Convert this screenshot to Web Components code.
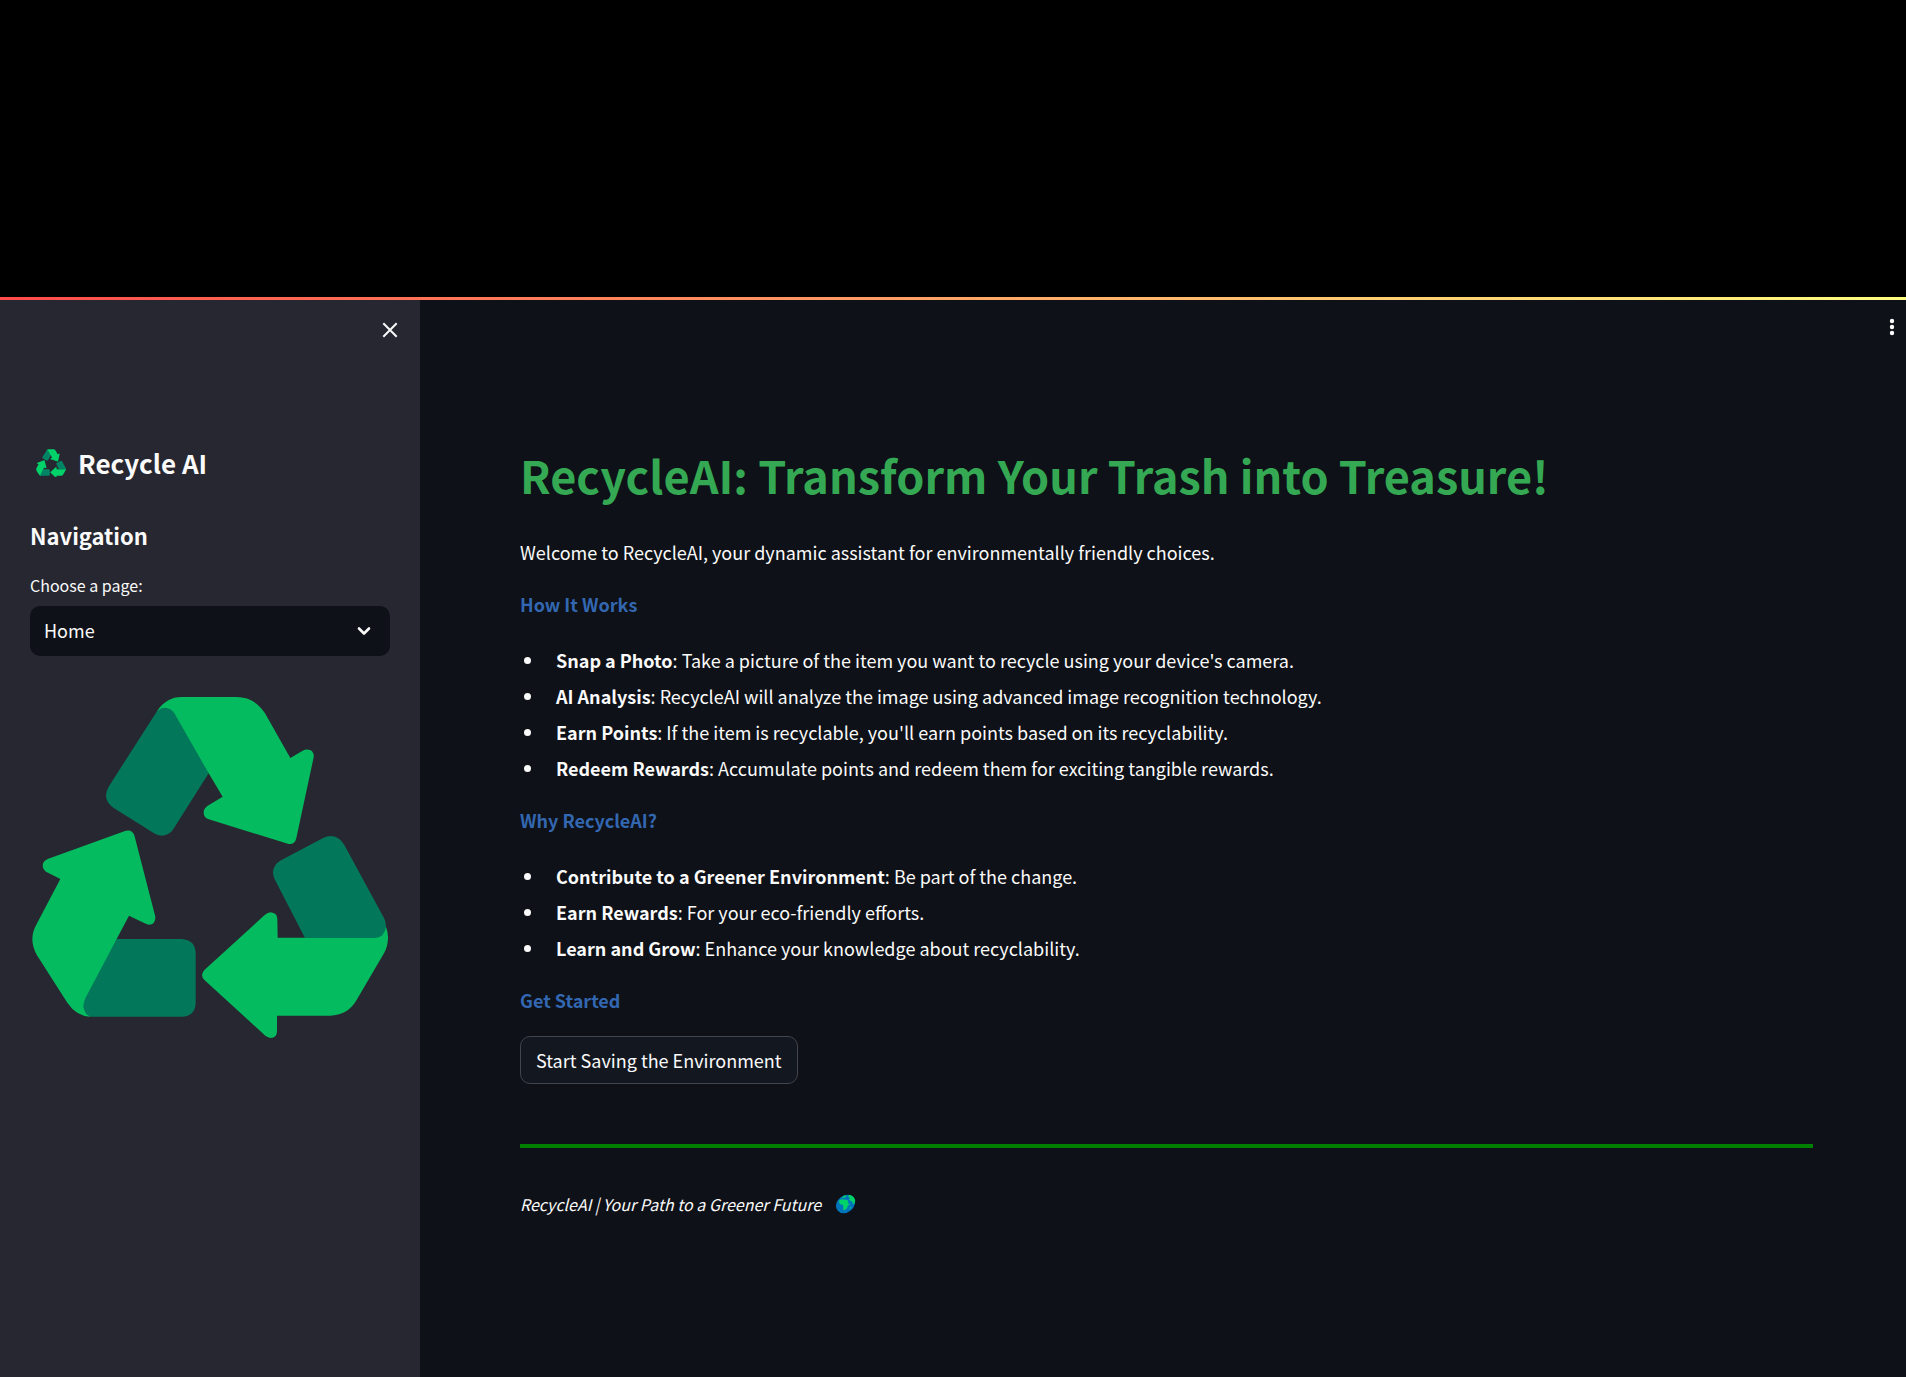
<!DOCTYPE html>
<html lang="en">
<head>
<meta charset="utf-8">
<meta name="viewport" content="width=device-width, initial-scale=1">
<title>Recycle AI</title>
<style>
    body {
        margin: 0;
        background: #000;
        color: #fafafa;
        font-family: "Noto Sans CJK SC", "Noto Sans", sans-serif;
        font-size: 18px;
        line-height: 32px;
    }
</style>
</head>
<body>
<app-shell>
    <app-sidebar slot="sidebar"></app-sidebar>
    <page-title>RecycleAI: Transform Your Trash into Treasure!</page-title>
    <page-intro>Welcome to RecycleAI, your dynamic assistant for environmentally friendly choices.</page-intro>
    <info-section heading="How It Works">
        <info-item><b slot="term">Snap a Photo</b>Take a picture of the item you want to recycle using your device's camera.</info-item>
        <info-item><b slot="term">AI Analysis</b>RecycleAI will analyze the image using advanced image recognition technology.</info-item>
        <info-item><b slot="term">Earn Points</b>If the item is recyclable, you'll earn points based on its recyclability.</info-item>
        <info-item><b slot="term">Redeem Rewards</b>Accumulate points and redeem them for exciting tangible rewards.</info-item>
    </info-section>
    <info-section heading="Why RecycleAI?">
        <info-item><b slot="term">Contribute to a Greener Environment</b>Be part of the change.</info-item>
        <info-item><b slot="term">Earn Rewards</b>For your eco-friendly efforts.</info-item>
        <info-item><b slot="term">Learn and Grow</b>Enhance your knowledge about recyclability.</info-item>
    </info-section>
    <get-started heading="Get Started">Start Saving the Environment</get-started>
    <page-footer>RecycleAI | Your Path to a Greener Future</page-footer>
</app-shell>

<script>
class AppShell extends HTMLElement {
    connectedCallback() {
        this.attachShadow({ mode: 'open' });
        this.shadowRoot.innerHTML = `
            <style>
                :host {
                    display: flex;
                    flex-direction: column;
                    box-sizing: border-box;
                    min-height: 100vh;
                    padding-top: 297px;
                }
                .decoration {
                    height: 3px;
                    background: linear-gradient(to right, #ff4b4b, #fffd80);
                }
                .layout {
                    flex: 1;
                    display: grid;
                    grid-template-columns: 420px 1fr;
                    background: #0e1117;
                }
                .view {
                    display: flex;
                    flex-direction: column;
                }
                header {
                    display: flex;
                    justify-content: flex-end;
                    padding: 12px 0;
                }
                .menu {
                    display: flex;
                    padding: 5px;
                    border: none;
                    background: none;
                    color: #fafafa;
                }
                main {
                    display: flex;
                    flex-direction: column;
                    gap: 20px;
                    padding: 88px 93px 100px 100px;
                }
            </style>
            <div class="decoration"></div>
            <div class="layout">
                <slot name="sidebar"></slot>
                <div class="view">
                    <header>
                        <button class="menu" aria-label="Main menu">
                            <svg width="20" height="20" viewBox="0 0 20 20" fill="currentColor">
                                <circle cx="11" cy="4" r="2.2"/>
                                <circle cx="11" cy="10" r="2.2"/>
                                <circle cx="11" cy="16" r="2.2"/>
                            </svg>
                        </button>
                    </header>
                    <main><slot></slot></main>
                </div>
            </div>
        `;
    }
}

class RecycleLogo extends HTMLElement {
    connectedCallback() {
        this.attachShadow({ mode: 'open' });
        this.shadowRoot.innerHTML = `
            <style>
                :host {
                    display: block;
                }
                svg {
                    display: block;
                    width: 100%;
                }
                .front {
                    fill: var(--logo-front, #05bb5f);
                }
                .fold {
                    fill: var(--logo-fold, #037759);
                }
            </style>
            <svg viewBox="90 45 1080 1035" aria-hidden="true">
                <path class="front" d="M472 92C490 65 515 51 545 51H710C745 51 775 68 795 100L871 234L908 212Q920 205 932 211Q943 218 941 232L889 474Q885 494 866 492L624 417Q611 412 611 397Q611 386 622 378L668 350L626 280L500 160Z"/>
                <path class="fold" d="M470 95Q482 83 495 83Q514 84 524 101L626 280L524 441Q510 467 486 467Q474 467 462 460L340 383Q318 368 318 345Q318 335 326 320Z"/>
                <path class="front" d="M833 773H1125L1158 740Q1165 760 1164 776Q1163 800 1152 820L1068 963Q1043 1005 990 1007H831V1053Q831 1074 812 1074Q804 1073 796 1067L614 901Q606 893 606 885Q607 876 614 869L794 705Q803 697 812 697Q832 699 832 717Z"/>
                <path class="fold" d="M915 774L824 598Q819 588 819 577Q820 554 843 541L968 475Q980 468 993 468Q1019 470 1033 495L1152 714Q1159 728 1158 740Q1154 772 1125 774Z"/>
                <path class="front" d="M181 597L138 575Q128 568 128 556Q129 543 143 537L375 453Q396 447 403 466L466 710Q467 733 446 734Q440 733 434 730L387 707L350 777L300 960L270 1010Q228 1007 202 968L110 824Q97 800 97 777Q97 755 110 732Z"/>
                <path class="fold" d="M350 777H545Q586 780 587 820V968Q586 1008 545 1010H275Q255 1007 250 980Q250 968 256 955Z"/>
            </svg>
        `;
    }
}

class AppSidebar extends HTMLElement {
    connectedCallback() {
        this.attachShadow({ mode: 'open' });
        this.shadowRoot.innerHTML = `
            <style>
                :host {
                    display: block;
                    padding: 12px 30px;
                    background: #262730;
                }
                .top {
                    display: flex;
                    justify-content: flex-end;
                    margin-right: -18px;
                }
                .close {
                    display: flex;
                    padding: 8px;
                    border: none;
                    background: none;
                    color: #fafafa;
                }
                h1, h2 {
                    margin: 0;
                    font-weight: 700;
                }
                h1 {
                    display: flex;
                    align-items: center;
                    gap: 12px;
                    margin-top: 95px;
                    padding-left: 6px;
                    font-size: 26px;
                    line-height: 40px;
                }
                h1 recycle-logo {
                    width: 30px;
                    --logo-front: #00d26a;
                    --logo-fold: #008463;
                }
                h2 {
                    margin-top: 36px;
                    font-size: 22px;
                    line-height: 32px;
                }
                label {
                    display: block;
                    margin-top: 18px;
                    font-size: 16px;
                }
                .picker {
                    position: relative;
                    margin-top: 5px;
                }
                select {
                    display: block;
                    width: 100%;
                    height: 50px;
                    padding: 0 14px 2px;
                    border: none;
                    border-radius: 10px;
                    appearance: none;
                    background: #0e1117;
                    color: #fafafa;
                    font: inherit;
                }
                .chevron {
                    position: absolute;
                    top: 15px;
                    right: 16px;
                    pointer-events: none;
                }
                .picture {
                    margin-top: 39px;
                }
            </style>
            <div class="top">
                <button class="close" aria-label="Close sidebar">
                    <svg width="20" height="20" viewBox="0 0 20 20" fill="none" stroke="currentColor" stroke-width="2">
                        <path d="M3.3 3.3L16.7 16.7M16.7 3.3L3.3 16.7"/>
                    </svg>
                </button>
            </div>
            <h1><recycle-logo></recycle-logo>Recycle AI</h1>
            <h2>Navigation</h2>
            <label for="page">Choose a page:</label>
            <div class="picker">
                <select id="page">
                    <option>Home</option>
                </select>
                <svg class="chevron" width="20" height="20" viewBox="0 0 20 20" fill="none" stroke="#fafafa" stroke-width="2.6" stroke-linecap="round" stroke-linejoin="round">
                    <path d="M5 7.5L10 12.5L15 7.5"/>
                </svg>
            </div>
            <recycle-logo class="picture"></recycle-logo>
        `;
    }
}

class PageTitle extends HTMLElement {
    connectedCallback() {
        this.attachShadow({ mode: 'open' });
        this.shadowRoot.innerHTML = `
            <style>
                :host {
                    display: block;
                }
                h1 {
                    margin: 0;
                    padding-bottom: 8px;
                    color: #34a853;
                    font-size: 45px;
                    font-weight: 700;
                    line-height: 66px;
                }
            </style>
            <h1><slot></slot></h1>
        `;
    }
}

class PageIntro extends HTMLElement {
    connectedCallback() {
        this.attachShadow({ mode: 'open' });
        this.shadowRoot.innerHTML = `
            <style>
                :host {
                    display: block;
                }
                p {
                    margin: 0;
                }
            </style>
            <p><slot></slot></p>
        `;
    }
}

class InfoSection extends HTMLElement {
    connectedCallback() {
        this.attachShadow({ mode: 'open' });
        this.shadowRoot.innerHTML = `
            <style>
                :host {
                    display: block;
                }
                h2 {
                    margin: 0 0 24px;
                    color: #3367b1;
                    font-size: 18px;
                    font-weight: 700;
                    line-height: 32px;
                }
                .items {
                    display: flex;
                    flex-direction: column;
                    gap: 4px;
                }
            </style>
            <h2>${this.getAttribute('heading')}</h2>
            <div class="items" role="list"><slot></slot></div>
        `;
    }
}

class InfoItem extends HTMLElement {
    connectedCallback() {
        this.setAttribute('role', 'listitem');
        this.attachShadow({ mode: 'open' });
        this.shadowRoot.innerHTML = `
            <style>
                :host {
                    display: flex;
                    padding-left: 4px;
                }
                .dot {
                    flex: none;
                    width: 7px;
                    height: 7px;
                    margin: 13px 25px 0 0;
                    border-radius: 50%;
                    background: #fafafa;
                }
            </style>
            <span class="dot"></span>
            <span><slot name="term"></slot>: <slot></slot></span>
        `;
    }
}

class GetStarted extends HTMLElement {
    connectedCallback() {
        this.attachShadow({ mode: 'open' });
        this.shadowRoot.innerHTML = `
            <style>
                :host {
                    display: block;
                }
                h2 {
                    margin: 0 0 20px;
                    color: #3367b1;
                    font-size: 18px;
                    font-weight: 700;
                    line-height: 32px;
                }
                button {
                    display: block;
                    padding: 7px 15px;
                    border: 1px solid #41444c;
                    border-radius: 10px;
                    background: #131720;
                    color: #fafafa;
                    font: inherit;
                }
            </style>
            <h2>${this.getAttribute('heading')}</h2>
            <button><slot></slot></button>
        `;
    }
}

class PageFooter extends HTMLElement {
    connectedCallback() {
        this.attachShadow({ mode: 'open' });
        this.shadowRoot.innerHTML = `
            <style>
                :host {
                    display: block;
                }
                hr {
                    height: 4px;
                    margin: 40px 0;
                    border: none;
                    background: #008000;
                }
                footer {
                    display: flex;
                    align-items: center;
                    gap: 14px;
                    font-size: 16px;
                    font-style: italic;
                }
            </style>
            <hr>
            <footer>
                <slot></slot>
                <svg width="22" height="20" viewBox="0 0 66 60" role="img" aria-label="Globe">
                    <g transform="translate(9 0) skewX(-12)">
                        <circle cx="29" cy="30" r="28" fill="#0074ba"/>
                        <path fill="#00d26a" d="M32 2C43 3 52 9 56 20L55 31L51 29L48 23L42 20L36 17L39 12L33 9ZM9 18L14 16L28 17L35 20L36 28L42 30L37 36L36 43L30 49L26 48L24 39L22 33L12 30L8 24ZM13 10L22 4L27 5L25 9L18 12ZM45 39L48 38L46 44L43 46Z"/>
                    </g>
                </svg>
            </footer>
        `;
    }
}

customElements.define('app-shell', AppShell);
customElements.define('recycle-logo', RecycleLogo);
customElements.define('app-sidebar', AppSidebar);
customElements.define('page-title', PageTitle);
customElements.define('page-intro', PageIntro);
customElements.define('info-section', InfoSection);
customElements.define('info-item', InfoItem);
customElements.define('get-started', GetStarted);
customElements.define('page-footer', PageFooter);
</script>
</body>
</html>
